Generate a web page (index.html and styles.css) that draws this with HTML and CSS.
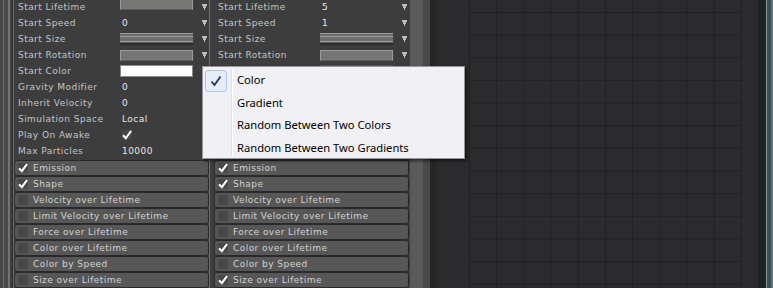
FILE: index.html
```html
<!DOCTYPE html>
<html lang="en">
<head>
<meta charset="utf-8"/>
<title>Particle System Inspector</title>
<link rel="stylesheet" href="styles.css">
</head>
<body>
<div class="editor">
  <div class="leftstrip"></div>

  <div class="panel first">
    <div class="inner">
      <div class="props">
        <div class="row"><span class="label">Start Lifetime</span><span class="value"><span class="field solid top"></span></span><span class="arrow"></span></div>
        <div class="row"><span class="label">Start Speed</span><span class="value">0</span><span class="arrow"></span></div>
        <div class="row"><span class="label">Start Size</span><span class="value"><span class="field striped"></span></span><span class="arrow"></span></div>
        <div class="row"><span class="label">Start Rotation</span><span class="value"><span class="field solid"></span></span><span class="arrow"></span></div>
        <div class="row"><span class="label">Start Color</span><span class="value"><span class="field white"></span></span><span class="arrow"></span></div>
        <div class="row"><span class="label">Gravity Modifier</span><span class="value">0</span></div>
        <div class="row"><span class="label">Inherit Velocity</span><span class="value">0</span></div>
        <div class="row"><span class="label">Simulation Space</span><span class="value">Local</span><span class="arrow"></span></div>
        <div class="row"><span class="label">Play On Awake</span><span class="value"><span class="tick"></span></span></div>
        <div class="row"><span class="label">Max Particles</span><span class="value">10000</span></div>
      </div>
      <div class="modules">
        <div class="module"><span class="tick"></span>Emission</div>
        <div class="module"><span class="tick"></span>Shape</div>
        <div class="module"><span class="box"></span>Velocity over Lifetime</div>
        <div class="module"><span class="box"></span>Limit Velocity over Lifetime</div>
        <div class="module"><span class="box"></span>Force over Lifetime</div>
        <div class="module"><span class="box"></span>Color over Lifetime</div>
        <div class="module"><span class="box"></span>Color by Speed</div>
        <div class="module"><span class="box"></span>Size over Lifetime</div>
      </div>
    </div>
  </div>

  <div class="panel second">
    <div class="inner">
      <div class="props">
        <div class="row"><span class="label">Start Lifetime</span><span class="value">5</span><span class="arrow"></span></div>
        <div class="row"><span class="label">Start Speed</span><span class="value">1</span><span class="arrow"></span></div>
        <div class="row"><span class="label">Start Size</span><span class="value"><span class="field striped"></span></span><span class="arrow"></span></div>
        <div class="row"><span class="label">Start Rotation</span><span class="value"><span class="field solid"></span></span><span class="arrow"></span></div>
        <!-- this row and the ones below sit under the popup -->
        <div class="row"><span class="label"></span><span class="value"><span class="field black"></span></span><span class="arrow"></span></div>
        <div class="row"></div>
        <div class="row"></div>
        <div class="row"></div>
        <div class="row"></div>
        <div class="row"></div>
      </div>
      <div class="modules">
        <div class="module"><span class="tick"></span>Emission</div>
        <div class="module"><span class="tick"></span>Shape</div>
        <div class="module"><span class="box"></span>Velocity over Lifetime</div>
        <div class="module"><span class="box"></span>Limit Velocity over Lifetime</div>
        <div class="module"><span class="box"></span>Force over Lifetime</div>
        <div class="module"><span class="tick"></span>Color over Lifetime</div>
        <div class="module"><span class="box"></span>Color by Speed</div>
        <div class="module"><span class="tick"></span>Size over Lifetime</div>
      </div>
    </div>
  </div>

  <div class="divider"></div>
  <div class="canvas"><div class="grid"></div></div>
  <div class="rightedge"></div>

  <!-- Start Color mode popup -->
  <div class="menu">
    <div class="sep"></div>
    <div class="item checked">
      <span class="checkmark">
        <svg width="12" height="12" viewBox="0 0 12 12"><path d="M1.5 6.5 L4.5 10 L10.5 1.5" fill="none" stroke="#1b3566" stroke-width="1.8"/></svg>
      </span>Color</div>
    <div class="item">Gradient</div>
    <div class="item">Random Between Two Colors</div>
    <div class="item">Random Between Two Gradients</div>
  </div>
</div>
</body>
</html>
```

FILE: styles.css
```css
html, body { margin: 0; padding: 0; background: #3d3d3d; }

.editor { display: flex; width: 773px; height: 288px; overflow: hidden;
          position: relative; font-family: "DejaVu Sans", sans-serif;
          font-size: 9px; letter-spacing: 0.45px; }

.leftstrip { width: 13px; flex: none;
  background: linear-gradient(to right, #474747 0, #474747 3px, #6a6a6a 3px,
    #6a6a6a 4px, #4a4a4a 4px, #4a4a4a 8px, #727272 8px, #727272 10px,
    #404040 10px, #404040 12px, #2a2a2a 12px); }

.panel { flex: none; overflow: hidden; background: #3d3d3d;
         border-left: 1px solid #3c74d4; }
.panel.first { width: 195px; }
.panel.second { width: 200px; }
.inner { width: 200px; }
.panel.first .inner { margin-left: -4px; }

.props { margin-top: -1px; }
.row { display: flex; align-items: center; height: 16px; }
.label { width: 103px; padding-left: 8px; color: #c4c4c4; flex: none; }
.value { width: 80px; padding-left: 1px; color: #e6e6e6; flex: none;
         display: flex; align-items: center; }
.arrow { width: 5px; height: 6px; flex: none;
  background: linear-gradient(#bcbcbc, #bcbcbc) 0 0 / 5px 2px no-repeat,
              linear-gradient(#bcbcbc, #bcbcbc) 1px 2px / 3px 2px no-repeat,
              linear-gradient(#bcbcbc, #bcbcbc) 2px 4px / 1px 2px no-repeat; }

.field { display: block; width: 73px; height: 11px; box-sizing: border-box;
         margin-left: -2px; }
.field.solid { background: #767674; border: 1px solid #9a9a9a;
               border-bottom-color: #5c5c5c; }
.field.top { margin-top: -5px; }
.field.striped { height: 12px;
  background: linear-gradient(to bottom, #9a9a9a 0, #9a9a9a 1px, #6c6c6c 1px,
    #6c6c6c 3px, #a0a0a0 3px, #a0a0a0 4px, #6e6e6e 4px, #6e6e6e 8px,
    #9c9c9c 8px, #9c9c9c 9px, #5e5e5e 9px, #5e5e5e 10px, #2e2e2e 10px); }
.field.white { height: 12px; background: #fff; border: 1px solid #8a8a8a; }
.field.black { height: 12px; background: #161616; border: 1px solid #5a5a5a; }

.tick, .box { display: inline-block; width: 10px; height: 10px; flex: none;
              border-radius: 2px; background: #454545; }
.tick { background: #454545 url("data:image/svg+xml;utf8,<svg xmlns='http://www.w3.org/2000/svg' width='10' height='10'><path d='M1 5.2 L3.8 8.2 L9.2 0.8' fill='none' stroke='white' stroke-width='2'/></svg>") no-repeat; }

.modules { margin-top: 1px; }
.module { display: flex; align-items: center; height: 16px; box-sizing: border-box;
          margin: 0 1px 0 4px; padding-left: 3px; background: #575757;
          border: 1px solid #2a2a2a; border-radius: 3px; color: #d2d2d2; }
.module .tick, .module .box { margin-right: 5px; background-color: #484848; }

.divider { width: 27px; flex: none;
  background: linear-gradient(to right, #5b5b5b 0, #5b5b5b 13px, #484848 13px,
    #484848 20px, #262626 20px, #262626 26px, #2b2a2d 26px); }

.canvas { width: 321px; flex: none; background: #2b2a2d; }
.grid { margin-left: 32px; width: 273px; height: 288px;
  background-image: linear-gradient(to right, #212023 1px, transparent 1px),
                    linear-gradient(to bottom, #212023 1px, transparent 1px);
  background-size: 27.2px 22.65px;
  background-position: 0 12px; }

.rightedge { width: 15px; flex: none;
  background: linear-gradient(to right, #1f2220 0, #1f2220 8px, #85959c 8px,
    #85959c 9px, #3e4f5a 9px, #3e4f5a 13px, #617179 13px); }

.menu { position: absolute; left: 202px; top: 66px; width: 263px; height: 93px;
        box-sizing: border-box; padding-top: 2px; background: #f1f0f4;
        border: 1px solid #979797; box-shadow: 2px 2px 3px rgba(0, 0, 0, 0.55);
        font-family: "Noto Sans", sans-serif; font-size: 11.2px; letter-spacing: 0;
        color: #000; }
.sep { position: absolute; left: 28px; top: 2px; bottom: 2px; width: 1px;
       background: #e0dfe3; border-right: 1px solid #ffffff; }
.item { position: relative; height: 22.5px; line-height: 22px; padding-left: 34px; }
.checkmark { position: absolute; left: 2px; top: 1px; width: 20px; height: 20px;
             background: #e6edf8; border: 1px solid #aac6ea; border-radius: 3px;
             display: flex; align-items: center; justify-content: center; }
```
